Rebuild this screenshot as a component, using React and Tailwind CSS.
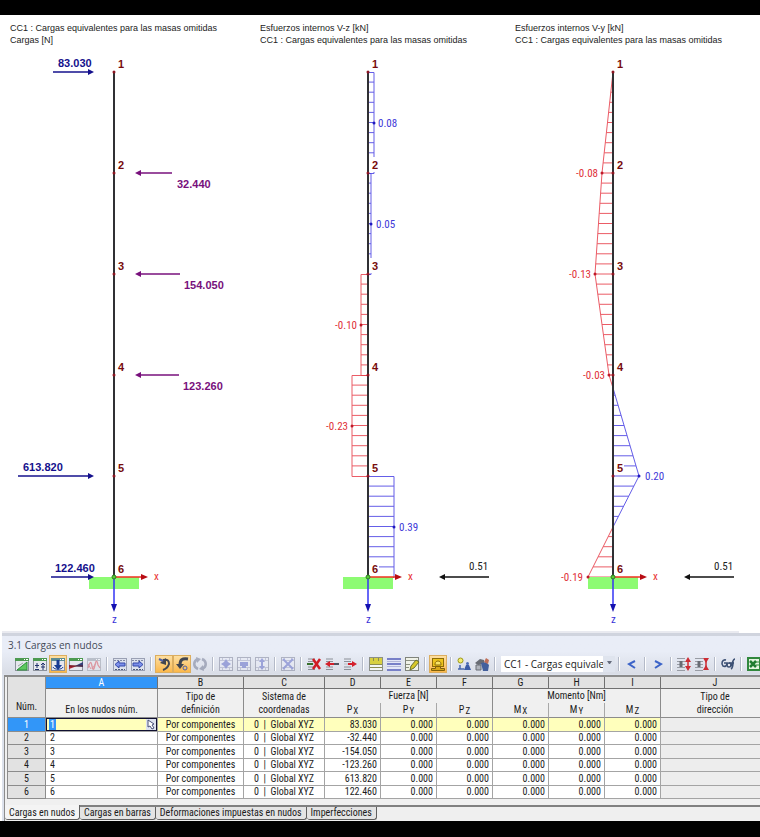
import clsx from 'clsx';

const NODE_TOP = 26;
const NODE_STEP = 101;
const nodeY = (i) => NODE_TOP + i * NODE_STEP;

const BLUE = '#4a42e4';
const RED = '#e8404c';

const Arrow = ({ from, to, y, color }) => {
  const dir = to > from ? 1 : -1;
  return (
    <g>
      <line x1={from} y1={y} x2={to - dir * 4} y2={y} stroke={color} strokeWidth="1.5" />
      <path d={`M${to} ${y}l${-dir * 6} -3v6z`} fill={color} />
    </g>
  );
};

const Support = ({ x }) => {
  const y = nodeY(5);
  return (
    <g>
      <rect x={x - 25} y={y} width="50" height="12" fill="#8dfb73" />
      <line x1={x} y1={y} x2={x + 28} y2={y} stroke="#f03020" strokeWidth="1.5" />
      <path d={`M${x + 34} ${y}l-7 -3v6z`} fill="#b80c14" />
      <line x1={x} y1={y} x2={x} y2={y + 28} stroke="#3434f4" strokeWidth="1.5" />
      <path d={`M${x} ${y + 35}l-3 -8h6z`} fill="#1410b0" />
      <circle cx={x} cy={y} r="2" fill="#58c838" stroke="#2c8020" />
      <text x={x + 40} y={y + 3} fontSize="11" fill="#e83030">x</text>
      <text x={x - 2} y={y + 46} fontSize="11" fill="#3830d8">z</text>
    </g>
  );
};

const Column = ({ x, masked }) => (
  <g>
    {masked && [1, 2, 3, 4, 5].map((i) => (
      <rect key={i} x={x + 1} y={nodeY(i) - 16} width="10" height="15" fill="#fff" />
    ))}
    <line x1={x} y1={nodeY(0)} x2={x} y2={nodeY(5)} stroke="#303034" strokeWidth="2" />
    <Support x={x} />
    {[0, 1, 2, 3, 4, 5].map((i) => (
      <g key={i}>
        {i < 5 && <circle cx={x} cy={nodeY(i)} r="1.5" fill="#8c1420" />}
        <text
          x={x + 4}
          y={nodeY(i) - 4}
          fontSize="11"
          fontWeight="bold"
          fill="#780c0c"
          className="font-['Liberation_Sans',sans-serif]"
        >
          {i + 1}
        </text>
      </g>
    ))}
  </g>
);

const Value = ({ x, y, text }) => {
  const negative = text.startsWith('-');
  return (
    <text x={x} y={y + 4} fontSize="11" fill={negative ? '#e03038' : '#4038d8'} textAnchor={negative ? 'end' : 'start'}>
      {text}
    </text>
  );
};

const Chart = ({ title, subtitle, children }) => (
  <section className="min-w-0 pt-[7px]">
    <div className="pl-[10px] text-[9px] leading-[12px] text-[#222] whitespace-nowrap font-['Liberation_Sans',sans-serif]">
      <h2>{title}</h2>
      <p>{subtitle}</p>
    </div>
    <svg width="250" height="585" viewBox="0 0 250 585" className="block">
      {children}
    </svg>
  </section>
);

const loads = [
  { node: 0, from: 53, to: 94, label: '83.030', x: 58, dy: -5 },
  { node: 1, from: 172, to: 135, label: '32.440', x: 177, dy: 15 },
  { node: 2, from: 180, to: 135, label: '154.050', x: 184, dy: 15 },
  { node: 3, from: 179, to: 135, label: '123.260', x: 183, dy: 15 },
  { node: 4, from: 18, to: 94, label: '613.820', x: 23, dy: -5 },
  { node: 5, from: 51, to: 94, label: '122.460', x: 55, dy: -5 },
];

const LoadsDrawing = () => (
  <>
    <Column x={114} />
    {loads.map((l) => {
      const color = l.to > l.from ? '#14108c' : '#78107c';
      return (
        <g key={l.node}>
          <Arrow from={l.from} to={l.to} y={nodeY(l.node)} color={color} />
          <text
            x={l.x}
            y={nodeY(l.node) + l.dy}
            fontSize="11"
            fontWeight="bold"
            fill={color}
            className="font-['Liberation_Sans',sans-serif]"
          >
            {l.label}
          </text>
        </g>
      );
    })}
  </>
);

const Reaction = ({ x }) => (
  <g>
    <Arrow from={x + 50} to={x} y={nodeY(5)} color="#111" />
    <text x={x + 30} y={nodeY(5) - 7} fontSize="11" fill="#222">0.51</text>
  </g>
);

const shearZ = [
  { width: 6, text: '0.08', x: 128 },
  { width: 3, text: '0.05', x: 126 },
  { width: -7, text: '-0.10', x: 107 },
  { width: -16, text: '-0.23', x: 98 },
  { width: 26, text: '0.39', x: 149 },
];

const ShearZDrawing = () => {
  const axis = 118;
  return (
    <>
      {shearZ.map((s, i) => {
        const y = nodeY(i);
        return (
          <g key={s.text} stroke={s.width > 0 ? BLUE : RED} opacity="0.85">
            <path d={`M${axis} ${y + 0.5}h${s.width}v${NODE_STEP}h${-s.width}`} fill="none" />
            {Array.from({ length: 9 }, (_, k) => (
              <line key={k} x1={axis} x2={axis + s.width} y1={y + (k + 1) * 10.1} y2={y + (k + 1) * 10.1} />
            ))}
          </g>
        );
      })}
      <Column x={axis} masked />
      {shearZ.map((s, i) => (
        <g key={s.text}>
          <circle cx={axis + s.width} cy={nodeY(i) + 51} r="1.5" fill={s.width > 0 ? '#2018c0' : '#c01828'} />
          <Value x={s.x} y={nodeY(i) + 51} text={s.text} />
        </g>
      ))}
      <Reaction x={189} />
    </>
  );
};

// [distance along the column, offset from the axis]
const shearY = [[0, 0], [101, -11], [202, -18], [303, -4], [316, 0], [404, 26], [455, 0], [505, -25]];

const offsetAt = (d) => {
  const i = shearY.findIndex(([p]) => p >= d);
  if (i <= 0) return 0;
  const [p0, o0] = shearY[i - 1];
  const [p1, o1] = shearY[i];
  return o0 + ((o1 - o0) * (d - p0)) / (p1 - p0);
};

const ShearYDrawing = () => {
  const axis = 108;
  return (
    <>
      <g opacity="0.85">
        {Array.from({ length: 50 }, (_, k) => {
          const d = (k + 1) * 10.1;
          const o = offsetAt(Math.min(d, 505));
          return (
            <line key={k} x1={axis} x2={axis + o} y1={NODE_TOP + d} y2={NODE_TOP + d} stroke={o > 0 ? BLUE : RED} />
          );
        })}
        {shearY.slice(1).map(([d, o], i) => {
          const [pd, po] = shearY[i];
          return (
            <line
              key={d}
              x1={axis + po}
              y1={NODE_TOP + pd}
              x2={axis + o}
              y2={NODE_TOP + d}
              stroke={po + o > 0 ? BLUE : RED}
            />
          );
        })}
      </g>
      <Column x={axis} masked />
      {[[101, -11], [202, -18], [303, -4], [404, 26], [505, -25]].map(([d, o]) => (
        <circle key={d} cx={axis + o} cy={NODE_TOP + d} r="1.5" fill={o > 0 ? '#2018c0' : '#c01828'} />
      ))}
      <Value x={93} y={nodeY(1)} text="-0.08" />
      <Value x={86} y={nodeY(2)} text="-0.13" />
      <Value x={100} y={nodeY(3)} text="-0.03" />
      <Value x={140} y={nodeY(4)} text="0.20" />
      <Value x={78} y={nodeY(5)} text="-0.19" />
      <Reaction x={179} />
    </>
  );
};

/* Toolbar icons */

const Icon = ({ children, faded }) => (
  <svg width="16" height="16" viewBox="0 0 16 16" fill="none" className={faded ? 'opacity-45' : undefined}>
    {children}
  </svg>
);

const Frame = ({ bar = '#4c9a50' }) => (
  <>
    <rect x="1.5" y="2.5" width="13" height="12" fill="#e6e8ee" stroke="#8c929c" />
    <rect x="1" y="2" width="14" height="3" fill={bar} />
    <path d="M10 3.5h1M12 3.5h2" stroke="#fff" />
  </>
);

const Grid = () => (
  <>
    <rect x="1.5" y="1.5" width="13" height="13" fill="#eceef8" stroke="#70748c" />
    <path d="M2 4.5h12M2 11.5h12M4.5 2v3M11.5 2v3M4.5 11v3M11.5 11v3" stroke="#9ca0bc" />
  </>
);

const Rows = () => (
  <>
    <path d="M2 3h7M2 5.5h7M2 11h7M2 13.5h7" stroke="#8c9098" />
    <path d="M2 8h6" stroke="#b8bcc4" />
  </>
);

const LoadIcon = () => (
  <Icon>
    <Frame />
    <path d="M3 14L13 6v8z" fill="#5ec860" stroke="#2c9038" />
    <path d="M4 10l5-3" stroke="#98a8a0" />
  </Icon>
);

const PlusMinusIcon = () => (
  <Icon>
    <Frame />
    <path d="M5 7v5M3 13.5h4M3 9.5h4M11 7v7M9 9l2-2 2 2M9 11h4" stroke="#20306c" />
  </Icon>
);

const NodalLoadIcon = () => (
  <Icon>
    <Frame bar="#5c8c94" />
    <path d="M8 4v6" stroke="#183c94" strokeWidth="3" />
    <path d="M4 9h8l-4 5z" fill="#183c94" />
    <path d="M3 11c1 3 9 3 10 0" stroke="#183c94" />
  </Icon>
);

const WedgeIcon = () => (
  <Icon>
    <Frame />
    <path d="M1 13V9l8 1z" fill="#b02430" />
    <path d="M15 6v5l-8-1z" fill="#344078" />
    <path d="M1 10h14" stroke="#581c28" />
  </Icon>
);

const WaveIcon = () => (
  <Icon faded>
    <Frame bar="#88909c" />
    <path d="M2 12c2-7 3-7 4-2s2 4 3-1 2-5 3 0l2 3" stroke="#d83c48" strokeWidth="1.3" />
    <path d="M2 8l3 5M6 13l4-6" stroke="#d83c48" />
  </Icon>
);

const MoveIcon = ({ right }) => (
  <Icon>
    <rect x="1.5" y="2.5" width="13" height="12" fill="#dde2ee" stroke="#9aa0b4" />
    <path d="M2 4.5h12" stroke="#8088a4" strokeDasharray="2 1" />
    <path d="M3 13.5h10" stroke="#505c78" strokeDasharray="2 1" />
    <path d={right ? 'M3 7h6V5l4 3.5L9 12v-2H3z' : 'M13 7H7V5L3 8.5 7 12v-2h6z'} fill="#7c90ec" stroke="#3448a8" />
  </Icon>
);

const TurnIcon = ({ left }) => (
  <Icon>
    {left ? (
      <>
        <path d="M14 3C8 2 6 4 6 9" stroke="#424650" strokeWidth="3" />
        <path d="M2 8h8l-4 5z" fill="#424650" />
        <circle cx="11" cy="12" r="2" stroke="#5060a8" />
      </>
    ) : (
      <>
        <path d="M7 4c5-1 6 1 6 4-1 3-3 5-6 6" stroke="#424650" strokeWidth="2" />
        <path d="M10 2v7L4 7z" fill="#424650" />
        <path d="M3 3l4 2" stroke="#5060a8" strokeWidth="2" />
      </>
    )}
  </Icon>
);

const RefreshIcon = () => (
  <Icon faded>
    <path d="M6 13C1 11 1 5 6 3M10 3c5 2 5 8 0 10" stroke="#606884" strokeWidth="2.5" />
    <path d="M4 1l5 2-4 4zM12 15l-5-2 4-4z" fill="#606884" />
  </Icon>
);

const NodeGridIcon = ({ kind }) => (
  <Icon faded>
    <Grid />
    {kind === 'plus' && <path d="M8 3l2 3 3 2-3 2-2 3-2-3-3-2 3-2z" fill="#4854c0" />}
    {kind === 'pair' && <path d="M4 6h8v4H4zM6 10h4v2H6z" fill="#4854c0" />}
    {kind === 'line' && <path d="M8 2l3 4H9v4h2l-3 4-3-4h2V6H5z" fill="#4854c0" />}
    {kind === 'cross' && <path d="M3 3l10 10M13 3L3 13" stroke="#4854c0" strokeWidth="2" />}
  </Icon>
);

const RowDeleteIcon = () => (
  <Icon>
    <Rows />
    <path d="M1 8h6" stroke="#38702c" strokeWidth="2" />
    <path d="M7 3l7 10M14 3L7 13" stroke="#d01c24" strokeWidth="2.5" />
  </Icon>
);

const RowArrowIcon = ({ right }) => (
  <Icon>
    <Rows />
    {right ? (
      <path d="M6 7h4V5l5 3-5 3V9H6z" fill="#d4202c" />
    ) : (
      <>
        <path d="M1 8l5-3v2h4v2H6v2z" fill="#d4202c" />
        <path d="M10 8h5" stroke="#505460" strokeWidth="2" />
      </>
    )}
  </Icon>
);

const YellowTableIcon = () => (
  <Icon>
    <rect x="1.5" y="1.5" width="13" height="13" fill="#f4f6f4" stroke="#8c9088" />
    <path d="M2 2h12v6H2z" fill="#d8d040" />
    <path d="M5.5 2v3M10.5 2v3M2 8.5h12M2 11.5h12" stroke="#8c8c50" />
  </Icon>
);

const StripedTableIcon = () => (
  <Icon>
    <rect x="1" y="2" width="14" height="13" fill="#e4e7f8" />
    <path d="M1 3h14M1 8h14M1 14h14" stroke="#7880c8" strokeWidth="2" />
    <path d="M1 5.5h14M1 10.5h14" stroke="#b4b8d8" />
  </Icon>
);

const EditTableIcon = () => (
  <Icon>
    <rect x="1.5" y="1.5" width="13" height="13" fill="#f0f2e8" stroke="#80847c" />
    <path d="M2 4.5h12M2 8.5h4M2 11.5h3" stroke="#8c9080" />
    <path d="M6 14l1-4 5-6 3 2-5 6z" fill="#d8c828" stroke="#687030" />
  </Icon>
);

const StampIcon = () => (
  <Icon>
    <rect x="2.5" y="2.5" width="11" height="8" fill="#ecc41c" stroke="#8c6c08" />
    <path d="M5 8c0-4 6-4 6 0v1H5z" fill="#f8e468" stroke="#8c6c08" />
    <path d="M1.5 12.5h4v-2h5v2h4v2h-13z" fill="#d8a818" stroke="#806008" />
  </Icon>
);

const PersonIcon = () => (
  <Icon>
    <circle cx="4.5" cy="4.5" r="2.5" fill="#f4ec70" stroke="#9c9818" />
    <path d="M4 9v4M2 13h6" stroke="#4868b0" strokeWidth="1.5" />
    <circle cx="11.5" cy="7.5" r="1.5" fill="#4c6cb8" />
    <path d="M10 9h3l2 5H8z" fill="#3c5ca8" />
  </Icon>
);

const HandIcon = () => (
  <Icon>
    <path d="M1 7l5-4 4 1v4L4 9z" fill="#686c74" />
    <path d="M2 9h5v5H2z" fill="#b0b4bc" stroke="#686c74" />
    <path d="M7 7l5-1 3 3-1 6H9z" fill="#44609c" />
    <path d="M12 2l3 2-1 4-4-2z" fill="#c07058" />
  </Icon>
);

const ChevronIcon = ({ right }) => (
  <Icon>
    <path d={right ? 'M5 5l6 3-6 4' : 'M11 5L5 8l6 4'} stroke="#3c64c8" strokeWidth="2" />
  </Icon>
);

const RowSortIcon = ({ inward }) => (
  <Icon>
    <path d="M1 2.5h8M1 5.5h8M1 8.5h8M1 11.5h8M1 14.5h8" stroke="#989ca4" />
    <path d="M5 5v6" stroke="#686c74" strokeWidth="3" />
    <path d={inward ? 'M9 2h6l-3 5zM9 14h6l-3-5z' : 'M12 1l3 5H9zM12 15l3-5H9z'} fill="#cc2c34" />
    <path d="M12 4v9" stroke="#cc2c34" strokeWidth="1.5" />
  </Icon>
);

const GlassesIcon = () => (
  <Icon>
    <path d="M6 4C2 3 1 8 3 10c2 1 4 0 4-3H4M10 10c3 0 2-7 5-7M11 13c2-1 2-4 2-7M9 7h5" stroke="#3c5074" strokeWidth="1.6" />
    <circle cx="9" cy="9" r="2" stroke="#3c5074" strokeWidth="1.5" />
  </Icon>
);

const ExcelIcon = () => (
  <Icon>
    <rect x="2" y="2" width="12" height="12" fill="#e4f4e0" stroke="#30883c" strokeWidth="2" />
    <path d="M4 5l6 6M10 5l-6 6" stroke="#207c30" strokeWidth="2.5" />
    <path d="M10 6h3M10 9h3" stroke="#30883c" />
  </Icon>
);

const ToolButton = ({ label, active, children }) => (
  <button
    type="button"
    aria-label={label}
    className={clsx(
      'flex h-[18px] w-[18px] shrink-0 items-center justify-center',
      active && 'border border-[#dcae60] bg-linear-to-b from-[#fddfa0] to-[#fbb848]'
    )}
  >
    {children}
  </button>
);

const Separator = () => <span className="mx-[3px] h-[14px] w-[2px] shrink-0 border-l border-[#b4bac8] bg-white" />;

const Toolbar = () => (
  <div className="flex h-5 items-center overflow-hidden pl-[11px]">
    <ToolButton label="Casos de carga"><LoadIcon /></ToolButton>
    <ToolButton label="Combinaciones"><PlusMinusIcon /></ToolButton>
    <ToolButton label="Cargas" active><NodalLoadIcon /></ToolButton>
    <ToolButton label="Resultados"><WedgeIcon /></ToolButton>
    <ToolButton label="Diagramas"><WaveIcon /></ToolButton>
    <Separator />
    <ToolButton label="Tabla anterior"><MoveIcon /></ToolButton>
    <ToolButton label="Tabla siguiente"><MoveIcon right /></ToolButton>
    <Separator />
    <ToolButton label="Selección en gráfico" active><TurnIcon /></ToolButton>
    <ToolButton label="Selección en tabla" active><TurnIcon left /></ToolButton>
    <ToolButton label="Actualizar"><RefreshIcon /></ToolButton>
    <Separator />
    <ToolButton label="Añadir"><NodeGridIcon kind="plus" /></ToolButton>
    <ToolButton label="Agrupar"><NodeGridIcon kind="pair" /></ToolButton>
    <ToolButton label="Alinear"><NodeGridIcon kind="line" /></ToolButton>
    <Separator />
    <ToolButton label="Vaciar"><NodeGridIcon kind="cross" /></ToolButton>
    <Separator />
    <ToolButton label="Eliminar fila"><RowDeleteIcon /></ToolButton>
    <ToolButton label="Insertar fila"><RowArrowIcon /></ToolButton>
    <ToolButton label="Mover fila"><RowArrowIcon right /></ToolButton>
    <Separator />
    <ToolButton label="Filas rellenas"><YellowTableIcon /></ToolButton>
    <ToolButton label="Filas marcadas"><StripedTableIcon /></ToolButton>
    <ToolButton label="Editar tabla"><EditTableIcon /></ToolButton>
    <Separator />
    <ToolButton label="Vista" active><StampIcon /></ToolButton>
    <Separator />
    <ToolButton label="Información"><PersonIcon /></ToolButton>
    <ToolButton label="Configuración"><HandIcon /></ToolButton>
    <Separator />
    <div className="relative ml-[2px] w-[114px] shrink-0">
      <select
        aria-label="Caso de carga"
        className="block h-[16px] w-full appearance-none overflow-hidden bg-white pr-[12px] pl-[3px] text-[10px] leading-[16px] text-[#1c1c1c] font-['Open_Sans',sans-serif]"
      >
        <option>CC1 - Cargas equivalentes para las masas omitidas</option>
      </select>
      <span className="pointer-events-none absolute inset-y-0 right-0 flex w-[12px] justify-center bg-[#dfe4ee] pt-[5px]">
        <svg width="5" height="3" viewBox="0 0 5 3"><path d="M0 0h5L3 3H2z" fill="#666c7c" /></svg>
      </span>
    </div>
    <Separator />
    <ToolButton label="Anterior"><ChevronIcon /></ToolButton>
    <Separator />
    <ToolButton label="Siguiente"><ChevronIcon right /></ToolButton>
    <Separator />
    <ToolButton label="Expandir filas"><RowSortIcon /></ToolButton>
    <ToolButton label="Contraer filas"><RowSortIcon inward /></ToolButton>
    <Separator />
    <ToolButton label="Comentarios"><GlassesIcon /></ToolButton>
    <Separator />
    <ToolButton label="Exportar a Excel"><ExcelIcon /></ToolButton>
  </div>
);

/* Table */

const letters = ['A', 'B', 'C', 'D', 'E', 'F', 'G', 'H', 'I', 'J'];
const pX = ['83.030', '-32.440', '-154.050', '-123.260', '613.820', '122.460'];

const headCell = 'border-r border-b border-[#8c8c8c] bg-[#f0f0f0] p-0 font-normal';
const groupCell = 'border-r border-[#8c8c8c] bg-[#f0f0f0] p-0 font-normal';

const Component = ({ name, axis, last }) => (
  <th className={clsx(headCell, !last && 'border-r-[#a8a8a8]')}>
    {name}
    <span className="relative top-px ml-px text-[9px]">{axis}</span>
  </th>
);

const LoadsTable = () => (
  <table className="w-full min-w-[763px] table-fixed border-separate border-spacing-0 border-l border-[#8c8c8c] text-center text-[10px] leading-[12px] whitespace-nowrap text-[#1c1c1c]">
    <colgroup>
      <col className="w-[38px]" />
      <col className="w-[112px]" />
      <col className="w-[86px]" />
      <col className="w-[81px]" />
      {['D', 'E', 'F', 'G', 'H', 'I'].map((c) => <col key={c} className="w-[56px]" />)}
      <col />
    </colgroup>
    <thead>
      <tr className="h-[12px]">
        <th rowSpan={3} className="border-r border-b border-[#8c8c8c] bg-[#e2e2e2] p-0 pb-1 align-bottom font-normal">Núm.</th>
        {letters.map((l) => (
          <th
            key={l}
            className={clsx(
              'border-r border-b border-[#707070] p-0 pt-px font-normal leading-[10px]',
              l === 'A' ? 'bg-[#3296f8] text-white' : 'bg-[#e2e2e2]'
            )}
          >
            {l}
          </th>
        ))}
      </tr>
      <tr className="h-[14px]">
        <th rowSpan={2} className={clsx(headCell, 'pb-px align-bottom')}>En los nudos núm.</th>
        <th rowSpan={2} className={clsx(headCell, 'leading-[13px]')}>Tipo de<br />definición</th>
        <th rowSpan={2} className={clsx(headCell, 'leading-[13px]')}>Sistema de<br />coordenadas</th>
        <th colSpan={3} className={groupCell}>Fuerza [N]</th>
        <th colSpan={3} className={groupCell}>Momento [Nm]</th>
        <th rowSpan={2} className={clsx(headCell, 'leading-[13px]')}>Tipo de<br />dirección</th>
      </tr>
      <tr className="h-[15px]">
        <Component name="P" axis="X" />
        <Component name="P" axis="Y" />
        <Component name="P" axis="Z" last />
        <Component name="M" axis="X" />
        <Component name="M" axis="Y" />
        <Component name="M" axis="Z" last />
      </tr>
    </thead>
    <tbody>
      {pX.map((px, i) => {
        const selected = i === 0;
        const cell = clsx('border-r border-b border-[#a4a4a4] p-0', selected ? 'bg-[#ffffbc]' : 'bg-white');
        return (
          <tr key={px} className="h-[13px] odd:h-[14px]">
            <th
              className={clsx(
                'border-r border-b border-[#8c8c8c] p-0 font-normal',
                selected ? 'bg-[#3296f8] text-white' : 'bg-[#e2e2e2]'
              )}
            >
              {i + 1}
            </th>
            <td className={clsx(cell, 'text-left')}>
              {selected ? (
                <div className="flex h-[13px] items-center justify-between border border-[#101030] pl-[2px]">
                  <input
                    aria-label="En los nudos núm."
                    defaultValue="1"
                    className="h-[11px] w-[7px] bg-[#3296f8] pl-px leading-[11px] text-white outline-none"
                  />
                  <button type="button" aria-label="Seleccionar nudos" className="h-[11px] w-[10px] bg-[#dde2f0]">
                    <svg width="10" height="11" viewBox="0 0 10 11">
                      <path d="M2 1l6 4-2 1 2 3-2 1-2-3-2 1z" fill="#fff" stroke="#485078" />
                    </svg>
                  </button>
                </div>
              ) : (
                <span className="pl-[4px]">{i + 1}</span>
              )}
            </td>
            <td className={cell}>Por componentes</td>
            <td className={clsx(cell, 'whitespace-pre')}>{'0  |  Global XYZ'}</td>
            <td className={clsx(cell, 'pr-[3px] text-right')}>{px}</td>
            {['E', 'F', 'G', 'H', 'I'].map((c) => (
              <td key={c} className={clsx(cell, 'pr-[3px] text-right')}>0.000</td>
            ))}
            <td className="border-r border-b border-[#a4a4a4] bg-[#ededed] p-0" />
          </tr>
        );
      })}
    </tbody>
  </table>
);

const tabs = ['Cargas en nudos', 'Cargas en barras', 'Deformaciones impuestas en nudos', 'Imperfecciones'];

const Tabs = () => (
  <div className="flex h-[16px] border-t-2 border-[#808080] bg-[#efefef]" role="tablist">
    {tabs.map((tab, i) => (
      <button
        key={tab}
        type="button"
        role="tab"
        aria-selected={i === 0}
        className={clsx(
          'rounded-b-[3px] border-r border-b border-[#606060] px-[4px] text-[10px] leading-[12px] whitespace-nowrap text-[#202020]',
          i === 0 ? '-mt-[2px] h-[15px] bg-[#f4f4f4] pt-[2px]' : 'h-[13px] bg-[#e4e4e4]'
        )}
      >
        {tab}
      </button>
    ))}
  </div>
);

const App = () => (
  <main className="min-h-screen overflow-hidden bg-black pt-[15px] font-['Roboto_Condensed','Roboto',sans-serif]">
    <div className="bg-white">
      <div className="grid grid-cols-[250fr_255fr_255fr]">
        <Chart title="CC1 : Cargas equivalentes para las masas omitidas" subtitle="Cargas [N]">
          <LoadsDrawing />
        </Chart>
        <Chart title="Esfuerzos internos V-z [kN]" subtitle="CC1 : Cargas equivalentes para las masas omitidas">
          <ShearZDrawing />
        </Chart>
        <Chart title="Esfuerzos internos V-y [kN]" subtitle="CC1 : Cargas equivalentes para las masas omitidas">
          <ShearYDrawing />
        </Chart>
      </div>

      <div className="mr-[21px] ml-[2px] h-[2px] bg-[#e9eaf0]" />
      <section className="ml-[2px] border-t-[3px] border-[#d0d4de] bg-[#dde2ec]">
        <div className="bg-linear-to-b from-[#e9edf7] from-40% to-[#d9dde6]">
          <h1 className="pl-[6px] text-[10px] leading-[18px] text-[#444a58] font-['Open_Sans',sans-serif]">3.1 Cargas en nudos</h1>
          <Toolbar />
        </div>
        <div className="mt-px ml-[2px] overflow-hidden border-t-2 border-l border-[#8c8c8c] bg-[#f0f0f0]">
          <div className="pl-[2px]">
            <LoadsTable />
          </div>
          <div className="mt-[6px]">
            <Tabs />
          </div>
        </div>
      </section>
    </div>
  </main>
);

export default App;
